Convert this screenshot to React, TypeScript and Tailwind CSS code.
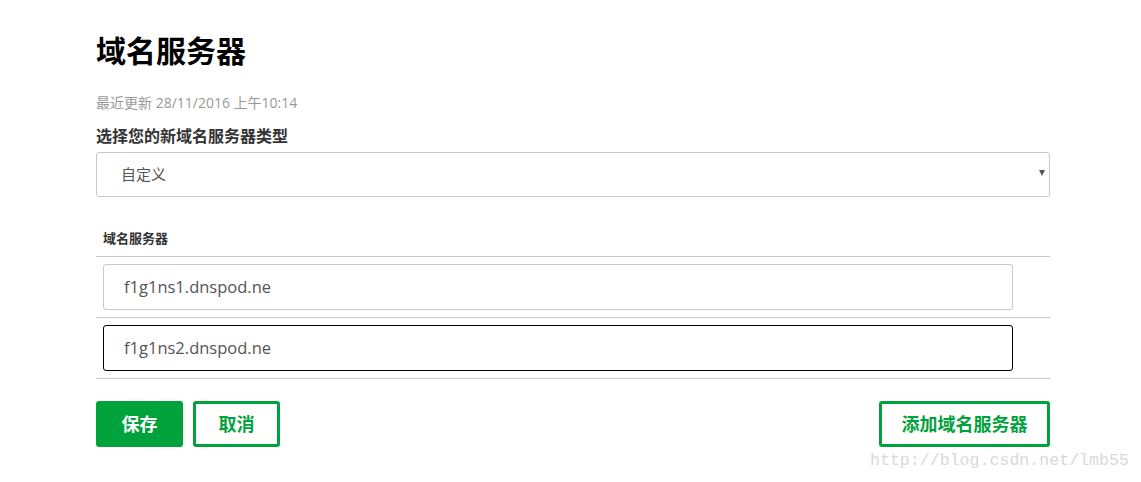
import { useState } from "react";

const cjk = "font-['Open_Sans','Noto_Sans_CJK_SC',sans-serif]";

export default function App() {
  const [servers, setServers] = useState(["f1g1ns1.dnspod.ne", "f1g1ns2.dnspod.ne"]);

  return (
    <div className={`relative w-[1141px] h-[482px] bg-white ${cjk}`}>
      <div className="pl-[96px] pt-[36px] w-[1050px]">
        {/* Header */}
        <h1 className="text-[30px] leading-[30px] font-bold text-black">域名服务器</h1>
        <p className="mt-[28px] text-[14px] leading-[17px] text-[#999]">最近更新 28/11/2016 上午10:14</p>
        <p className="mt-[16px] text-[16px] leading-[18px] font-semibold text-[#333]">选择您的新域名服务器类型</p>

        {/* Type select */}
        <div className="relative mt-[7px]">
          <select className="w-full h-[45px] appearance-none border border-[#c8c8c8] rounded-[3px] pl-[24px] text-[15px] text-[#555] bg-white outline-none">
            <option>自定义</option>
          </select>
          <span className="pointer-events-none absolute right-[5px] top-[18px] w-0 h-0 border-l-[3px] border-r-[3px] border-t-[6px] border-l-transparent border-r-transparent border-t-[#555]" />
        </div>

        {/* Name servers */}
        <div className="mt-[33px]">
          <div className="pl-[7px] pb-[10px] text-[13px] leading-[16px] font-semibold text-[#333] border-b border-[#c8c8c8]">
            域名服务器
          </div>
          {servers.map((s, i) => (
            <div key={i} className="pl-[7px] pr-[37px] py-[7px] border-b border-[#c8c8c8]">
              <div
                className={`relative flex items-center h-[46px] rounded-[3px] border px-[20px] bg-white ${
                  i === 1 ? "border-black" : "border-[#c8c8c8]"
                }`}
              >
                <input
                  value={s}
                  onChange={(e) => {
                    const next = [...servers];
                    next[i] = e.target.value;
                    setServers(next);
                  }}
                  className="w-full text-[16.5px] text-[#555] bg-transparent outline-none"
                />
              </div>
            </div>
          ))}
        </div>

        {/* Actions */}
        <div className="mt-[22px] flex items-center justify-between">
          <div className="flex gap-[10px]">
            <button className="w-[87px] h-[46px] rounded-[3px] bg-[#00a23c] text-white text-[18px] font-bold">保存</button>
            <button className="w-[87px] h-[46px] rounded-[3px] border-[3px] border-[#00a23c] text-[#00a23c] text-[18px] font-bold">取消</button>
          </div>
          <button className="w-[171px] h-[46px] rounded-[3px] border-[3px] border-[#00a23c] text-[#00a23c] text-[18px] font-bold">添加域名服务器</button>
        </div>
      </div>

      {/* watermark */}
      <div className="absolute left-[870px] top-[451px] text-[16.6px] leading-[20px] text-[#d9d9d9] font-['Liberation_Mono',monospace]">
        http://blog.csdn.net/lmb55
      </div>
    </div>
  );
}
